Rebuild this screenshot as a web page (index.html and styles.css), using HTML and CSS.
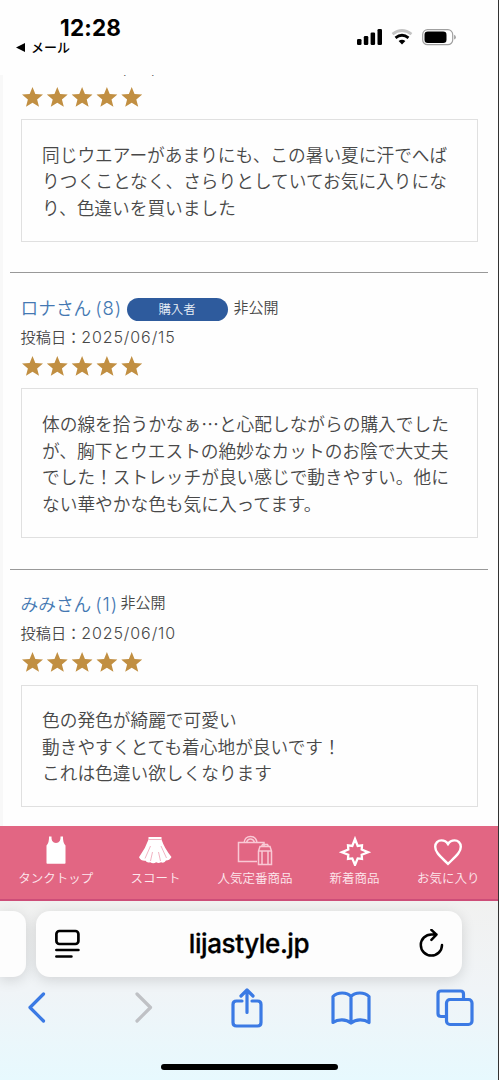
FILE: index.html
```
<!DOCTYPE html>
<html lang="ja">
<head>
<meta charset="utf-8">
<title>レビュー</title>
<link rel="stylesheet" href="styles.css">
</head>
<body>
<svg class="defs" width="0" height="0">
  <symbol id="star" viewBox="0 0 20 19"><path d="M10 0l2.700 6.700 7.300.500-5.600 4.600 1.800 7.100L10 15l-6.200 3.900 1.800-7.100L0 7.200l7.300-.5z"/></symbol>
  <symbol id="stars" viewBox="0 0 122 20">
    <use href="#star" x="0" width="21" height="20"/><use href="#star" x="24.800" width="21" height="20"/><use href="#star" x="49.600" width="21" height="20"/><use href="#star" x="74.400" width="21" height="20"/><use href="#star" x="99.200" width="21" height="20"/>
  </symbol>
</svg>
<div class="screen">
  <header class="status">
    <div class="status-left">
      <div class="clock">12:28</div>
      <div class="back-app"><svg width="10" height="9" viewBox="0 0 10 9"><path d="M0 4.500L9 0v9z"/></svg><span>メール</span></div>
    </div>
    <svg class="status-icons" width="100" height="18" viewBox="0 0 100 18">
      <rect x="1" y="11" width="4.500" height="6" rx="1.300"/><rect x="7.800" y="8" width="4.500" height="9" rx="1.300"/><rect x="14.600" y="4.500" width="4.500" height="12.500" rx="1.300"/><rect x="21.500" y="1" width="4.500" height="16" rx="1.300"/>
      <g fill="none"><path d="M36.500 6.200Q46 -1.200 55.500 6.200" stroke="#c4c4c4" stroke-width="2.800"/><path d="M39.500 9.800Q46 4.700 52.500 9.800" stroke="#000" stroke-width="2.800"/></g>
      <path d="M42.600 13Q46 10.300 49.400 13L46 16.500z"/>
      <rect x="66.700" y="1.700" width="30" height="15" rx="4.800" fill="none" stroke="#a0a0a0" stroke-width="1.200"/><rect x="68.500" y="3.500" width="22" height="11.500" rx="3.300"/><path d="M98 6.800q2 .8 2 2.400t-2 2.400z" fill="#aaa"/>
    </svg>
  </header>

  <main class="reviews">
    <article class="review review-first">
      <div class="date">投稿日：<span>2025/06/15</span></div>
      <div class="rating"><svg><use href="#stars"/></svg></div>
      <p class="comment">同じウエアーがあまりにも、この暑い夏に汗でへば<br>りつくことなく、さらりとしていてお気に入りにな<br>り、色違いを買いました</p>
    </article>
    <article class="review">
      <div class="head"><a class="name">ロナさん <span>(8)</span></a><span class="buyer">購入者</span><span class="privacy">非公開</span></div>
      <div class="date">投稿日：<span>2025/06/15</span></div>
      <div class="rating"><svg><use href="#stars"/></svg></div>
      <p class="comment">体の線を拾うかなぁ…と心配しながらの購入でした<br>が、胸下とウエストの絶妙なカットのお陰で大丈夫<br>でした！ストレッチが良い感じで動きやすい。他に<br>ない華やかな色も気に入ってます。</p>
    </article>
    <article class="review review-last">
      <div class="head"><a class="name">みみさん <span>(1)</span></a><span class="privacy">非公開</span></div>
      <div class="date">投稿日：<span>2025/06/10</span></div>
      <div class="rating"><svg><use href="#stars"/></svg></div>
      <p class="comment">色の発色が綺麗で可愛い<br>動きやすくとても着心地が良いです！<br>これは色違い欲しくなります</p>
    </article>
  </main>

  <nav class="shop-nav">
    <a><svg width="36" height="32" viewBox="0 0 36 32" fill="#fff"><path d="M11 2.500h2.500q-.5 6.500 4.500 6.500t4.500-6.500H25q-.3 6 2.500 9V29q0 .8-.8.800H9.300q-.8 0-.8-.8V11.500q2.800-3 2.500-9z"/></svg>タンクトップ</a>
    <a><svg width="36" height="32" viewBox="0 0 36 32"><path d="M11.500 3h13v2.500q3 9 10 17.500-2 3.500-5.500 3.500-1.500 3-5 1.800-2.500 1.500-4.800 0-3 2-6 0-3.200 1-4.700-1.500-4.500.5-6.500-3.500Q8.500 14.500 11.500 5.500z" fill="#fff"/><path d="M11.500 5.500h13M13.500 12L8 24.500M15.500 18L13.500 27M21.500 18l2 9M24 12l5.500 12" fill="none" stroke="#eda0b3" stroke-width=".8"/></svg>スコート</a>
    <a><svg width="36" height="32" viewBox="0 0 36 32" fill="none" stroke="#f9c9d5" stroke-width="1.500"><path d="M20 27.500H1.500V8.500H27V12M7 8.500Q8 2.500 13.500 2.500T20 8.500M9.500 8.500Q10.500 5 13.500 5T17.500 8.500M21.500 30.500V17l1.500-4.500h10l1.500 4.500v13.500zM21.500 17h13M25 17v13.500M31 17v13.500M24.500 12.500l1-2h5l1 2"/></svg>人気定番商品</a>
    <a><svg width="36" height="32" viewBox="0 0 36 32" fill="none" stroke="#fff" stroke-width="2.300"><path d="M18 5L20.700 12 25 11.300 24.700 15.500 31.200 18.200 24.700 20.800 25 25 20.700 24.400 18 31 15.300 24.400 11 25 11.300 20.800 4.800 18.200 11.300 15.500 11 11.300 15.300 12z"/></svg>新着商品</a>
    <a><svg width="36" height="32" viewBox="0 0 36 32" fill="none" stroke="#fff" stroke-width="2.400"><path d="M18 29.800L15 27C8.500 20.800 5.200 17.500 5.200 12.700 5.200 9 8 6.400 11.400 6.400 14.400 6.400 16.600 7.800 18 10 19.400 7.800 21.600 6.400 24.600 6.400 28 6.400 30.800 9 30.800 12.700 30.800 17.500 27.500 20.800 21 27z"/></svg>お気に入り</a>
  </nav>

  <footer class="browser">
    <div class="tabs">
      <div class="tab-previous"></div>
      <div class="address">
        <svg width="26" height="30" viewBox="0 0 26 30" fill="none" stroke="#000" stroke-width="2.700" stroke-linecap="round"><rect x="2.400" y="2" width="22" height="13" rx="3"/><path d="M2.400 21h22M2.400 27.500h15"/></svg>
        <span>lijastyle.jp</span>
        <svg width="26" height="30" viewBox="0 0 26 30" fill="none" stroke="#000" stroke-width="2.500" stroke-linecap="round" stroke-linejoin="round"><path d="M24 16A10.600 10.600 0 1 1 13.400 5.400H18.500M13.400 .9L18.500 5.600l-5.100 5.200"/></svg>
      </div>
    </div>
    <div class="tools">
      <svg width="18" height="32" viewBox="0 0 18 32"><path d="M15.500 2L2 15.500 15.500 29"/></svg>
      <svg class="disabled" width="18" height="32" viewBox="0 0 18 32"><path d="M2 2l13.500 13.500L2 29"/></svg>
      <svg width="32" height="40" viewBox="0 0 32 40"><path d="M11 13H5.500Q2 13 2 16.500V34.500Q2 38 5.500 38H26.500Q30 38 30 34.500V16.500Q30 13 26.500 13H21M16 24.500V2.500M10 8l6-6 6 6"/></svg>
      <svg width="40" height="34" viewBox="0 0 40 34"><path d="M20 5.500C16 .8 6.500 .8 2 5.500V31.500C7 27.800 15 27.800 20 32 25 27.800 33 27.800 38 31.500V5.500C33.500 .8 24 .8 20 5.500V31"/></svg>
      <svg width="38" height="38" viewBox="0 0 38 38"><path d="M27.500 10V5Q27.500 2 24.500 2H5Q2 2 2 5V24.500Q2 27.500 5 27.500H10"/><rect x="10.500" y="10.500" width="25.500" height="25" rx="3.500"/></svg>
    </div>
    <div class="home-indicator"></div>
  </footer>
</div>
</body>
</html>
```
FILE: styles.css
```
* { box-sizing: border-box; }
body { margin: 0; font-family: "Noto Sans CJK JP", sans-serif; }
svg { display: block; flex: none; }
.defs { position: absolute; }
.screen { width: 499px; height: 1080px; display: flex; flex-direction: column; overflow: hidden; background: #fefefe; border-right: 1px solid #333; }

.status { height: 75px; flex: none; display: flex; justify-content: space-between; padding: 15px 42px 0 16px; }
.clock { padding-left: 44px; font: 700 22.500px/25px Inter, sans-serif; letter-spacing: .2px; }
.back-app { display: flex; align-items: center; gap: 5px; height: 14px; font-size: 13px; font-weight: 500; line-height: 14px; }
.status-icons { margin-top: 13px; }

.reviews { height: 751px; flex: none; overflow: hidden; padding: 0 10px 0 7px; border-left: 3px solid #f8f8f8; color: #484848; font-weight: 350; }
.review { border-top: 1px solid #999; padding: 19px 10.500px 30.700px; }
.review-first { border-top: 0; padding-top: 0; margin-top: -23px; }
.review-first .date { margin-bottom: 1px; line-height: 27px; }
.review-first .date span { vertical-align: -2px; }
.review-last { padding-top: 18px; }
.review-last .comment { margin-top: 8px; }
.head { height: 30px; display: flex; align-items: center; white-space: nowrap; }
.name { width: 100px; font-size: 17.700px; color: #4478b2; }
.name span { font-family: Inter, sans-serif; font-weight: 300; font-size: 18.500px; letter-spacing: .9px; }
.buyer { width: 101px; height: 23px; margin: 4px 6px 0; border-radius: 12px; background: #2e5b9d; color: #e8eef7; font-size: 12.400px; line-height: 22px; text-align: center; }
.privacy { font-size: 15px; line-height: 28px; margin-top: -1px; }
.date { height: 29px; font-size: 15.200px; line-height: 29px; white-space: nowrap; }
.date span { font-family: Inter, sans-serif; font-weight: 300; font-size: 16px; letter-spacing: .9px; }
.rating { height: 30px; padding: 5px 0 0 1.500px; }
.rating svg { width: 122px; height: 20px; fill: #c18f42; }
.comment { margin: 7px 0 0; padding: 20.500px; border: 1px solid #e0e0e0; font-size: 17.700px; line-height: 26.600px; white-space: nowrap; }

.shop-nav { height: 75px; flex: none; display: grid; grid-template-columns: repeat(4, 99.600px) 88px; padding-left: 6px; padding-top: 8px; background: #e26683; border-bottom: 2px solid #cd4d78; }
.shop-nav a { display: flex; flex-direction: column; align-items: center; gap: 3px; color: #fde8ee; font-size: 12.500px; font-weight: 350; line-height: 18px; white-space: nowrap; }

.browser { height: 179px; flex: none; padding-top: 10px; background: linear-gradient(#f1f1f0, #f0f4f7 50%, #e7f9fe); }
.tabs { display: flex; gap: 10px; height: 66px; }
.tab-previous { width: 26px; border-radius: 0 13px 13px 0; background: #fdfdfd; box-shadow: 0 3px 14px #0002; }
.address { width: 426px; display: flex; align-items: center; justify-content: space-between; padding: 0 18px; border-radius: 14px; background: #fdfdfd; box-shadow: 0 3px 14px #0002; }
.address span { font: 500 26px/30px Inter, sans-serif; letter-spacing: -.4px; -webkit-text-stroke: .3px #000; }
.tools { height: 61px; display: grid; grid-template-columns: 74px 139px 68px 140px 68px; align-items: center; justify-items: center; }
.tools svg { fill: none; stroke: #3b7ae4; stroke-width: 3.200px; stroke-linecap: round; stroke-linejoin: round; }
.tools .disabled { stroke: #bfc1c5; }
.home-indicator { width: 177px; height: 6px; margin: 26px auto 0; border-radius: 3px; background: #000; }
```
